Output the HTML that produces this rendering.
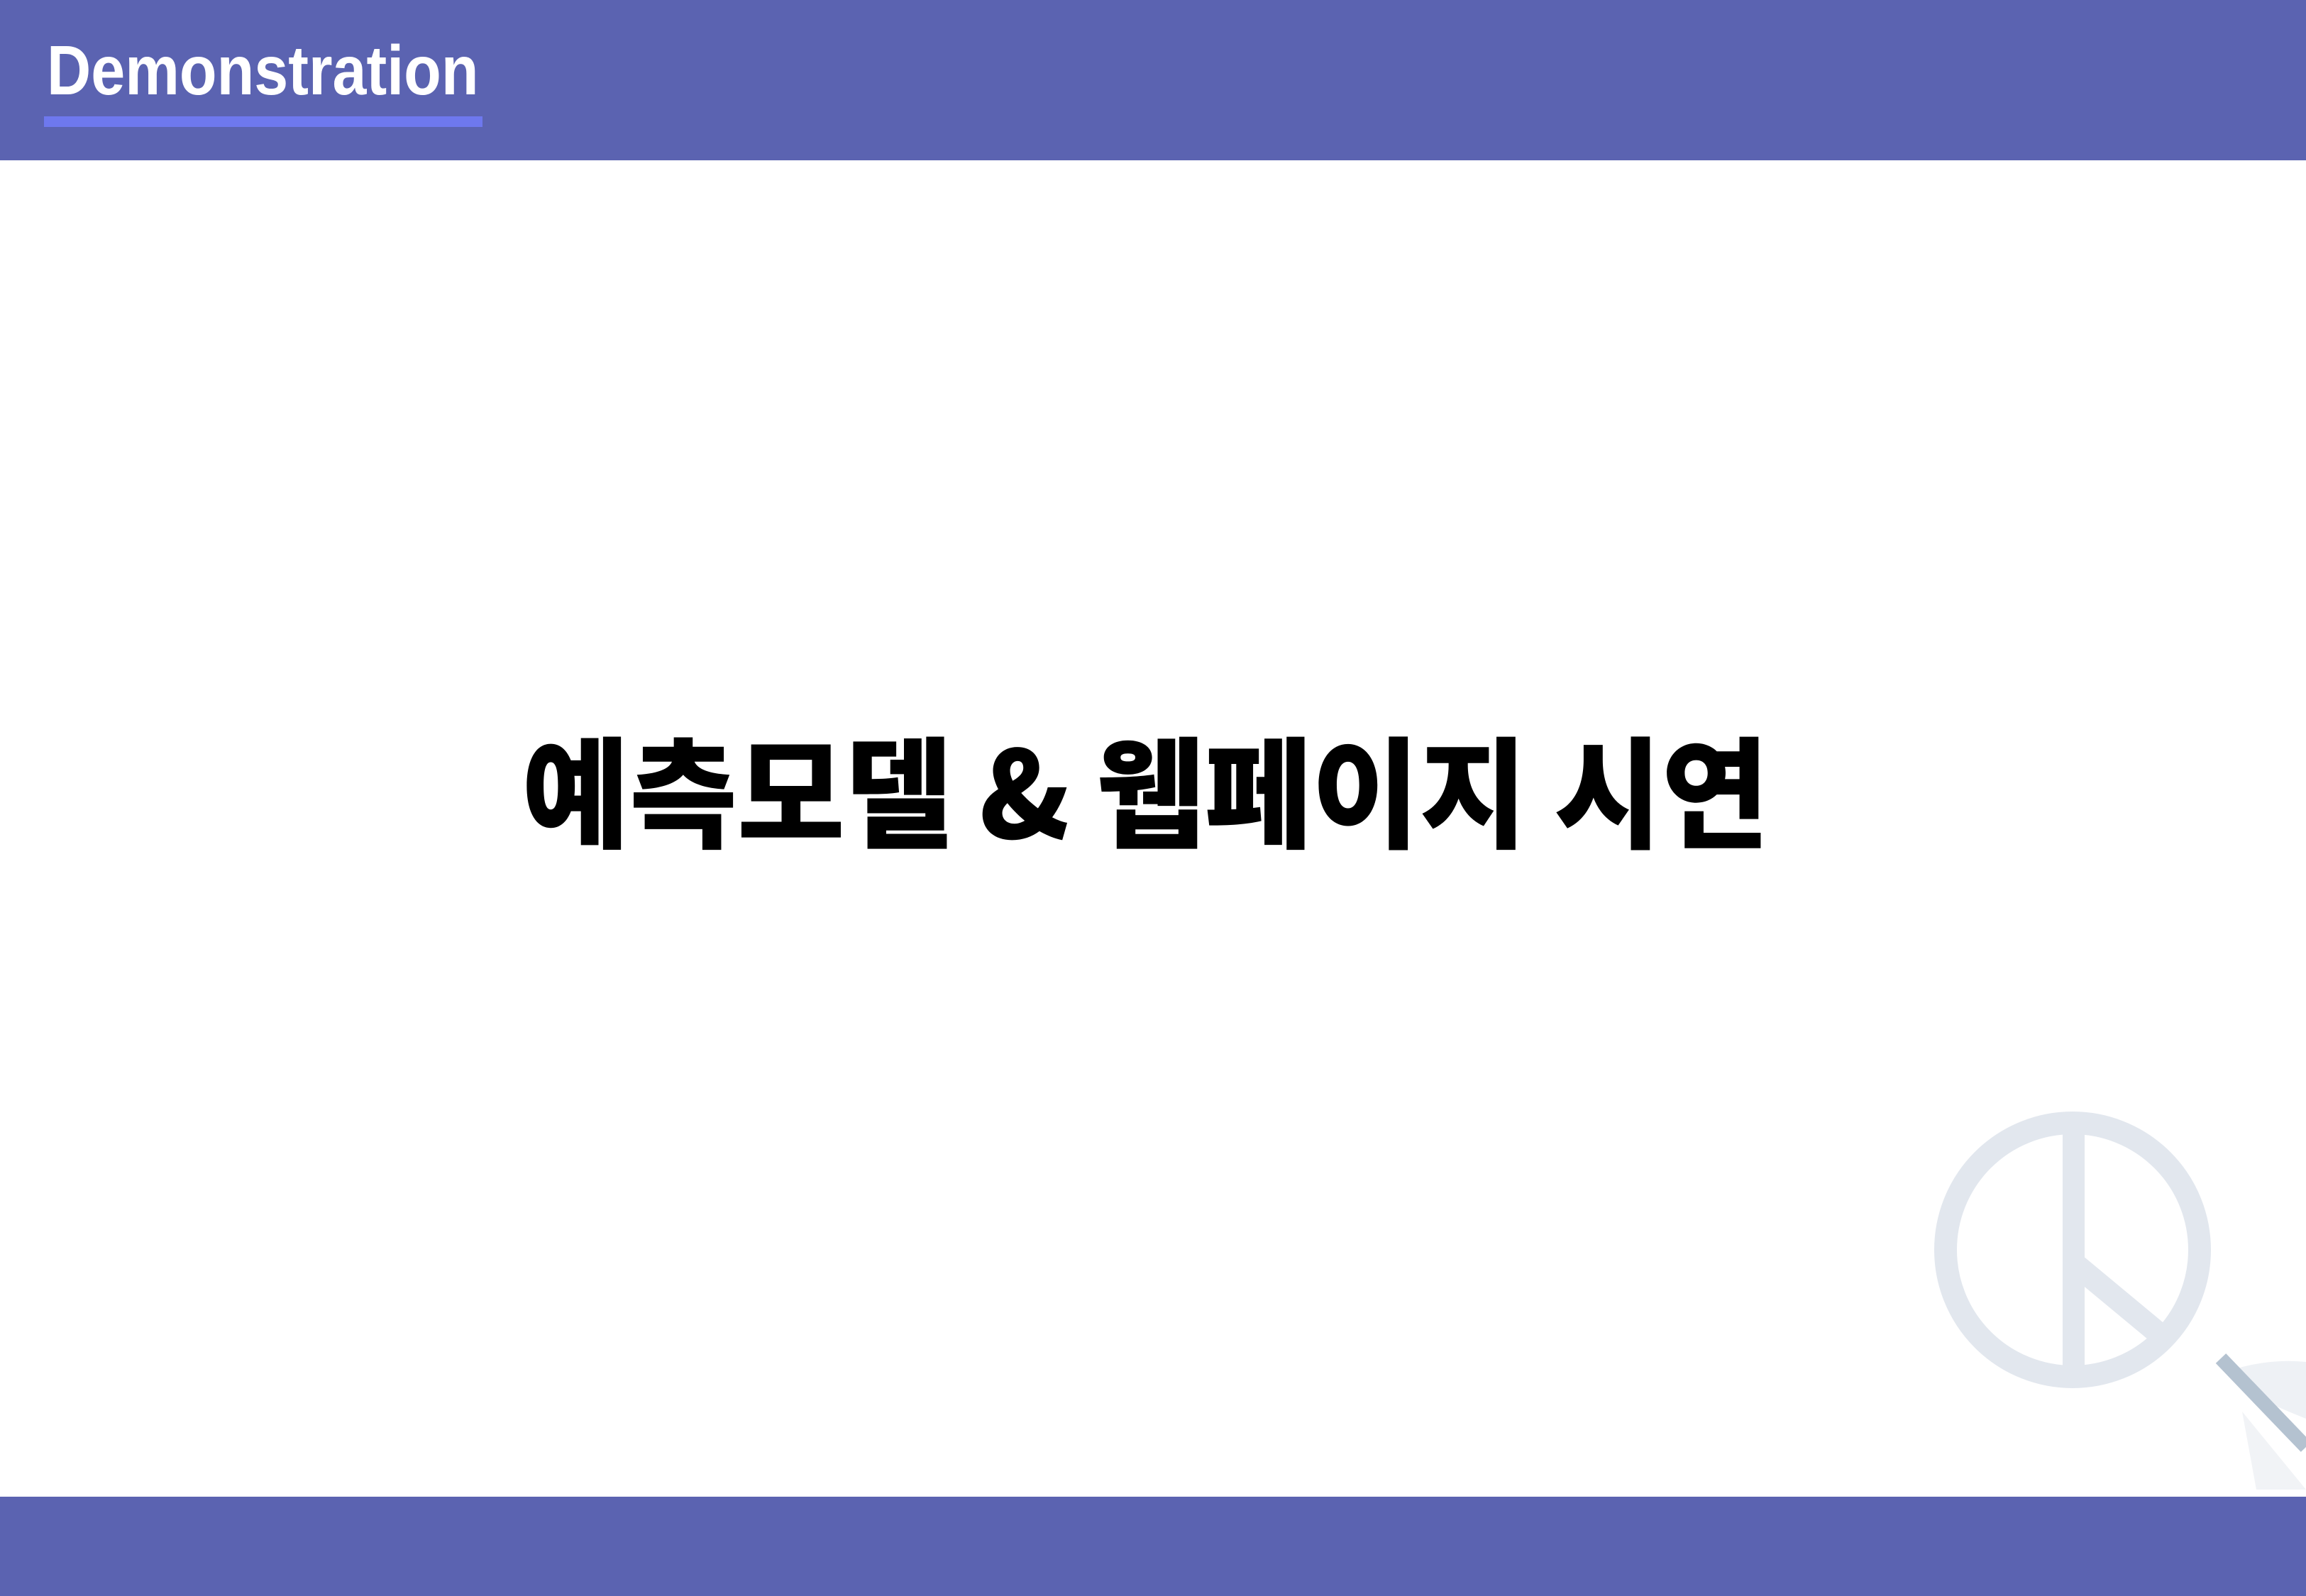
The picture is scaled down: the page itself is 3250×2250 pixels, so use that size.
<!DOCTYPE html>
<html><head><meta charset="utf-8"><style>
html,body{margin:0;padding:0}
body{width:3250px;height:2250px;position:relative;overflow:hidden;background:#fff;font-family:"Liberation Sans","Noto Sans CJK KR",sans-serif}
.hdr{position:absolute;left:0;top:0;width:3250px;height:226px;background:#5b63b1}
.ttl{position:absolute;left:66px;top:44px;font-size:98px;font-weight:bold;line-height:110px;color:#fff;transform:scaleX(0.88);transform-origin:0 0;white-space:nowrap}
.ul{position:absolute;left:62px;top:164px;width:618px;height:15px;background:#6e78ee}
.ftr{position:absolute;left:0;top:2110px;width:3250px;height:140px;background:#5b63b1}
.main{position:absolute;left:-10px;width:3250px;top:1003px;text-align:center;font-family:"Noto Sans CJK KR","Liberation Sans",sans-serif;font-weight:900;font-size:170px;line-height:210px;color:#000;white-space:nowrap;transform:scaleX(0.97);transform-origin:1610px 0}
</style></head><body>
<div class="hdr"><div class="ttl">Demonstration</div><div class="ul"></div></div>
<div class="main">예측모델 &amp; 웹페이지 시연</div>
<svg style="position:absolute;left:0;top:0" width="3250" height="2250">
<circle cx="2921" cy="1762" r="179" fill="none" stroke="#e2e7ee" stroke-width="32"/>
<rect x="2907" y="1583" width="31" height="358" fill="#e2e7ee"/>
<line x1="2922" y1="1780" x2="3058" y2="1893" stroke="#e2e7ee" stroke-width="32"/>
<path d="M3150 1930 Q3200 1915 3250 1920 L3250 2000 Q3200 1980 3160 1960 Z" fill="#eef1f5"/>
<path d="M3160 1990 L3250 2100 L3180 2100 Z" fill="#f1f3f6"/>
<line x1="3130" y1="1915" x2="3250" y2="2040" stroke="#b4c2d0" stroke-width="20"/>
</svg>
<div class="ftr"></div>
</body></html>
